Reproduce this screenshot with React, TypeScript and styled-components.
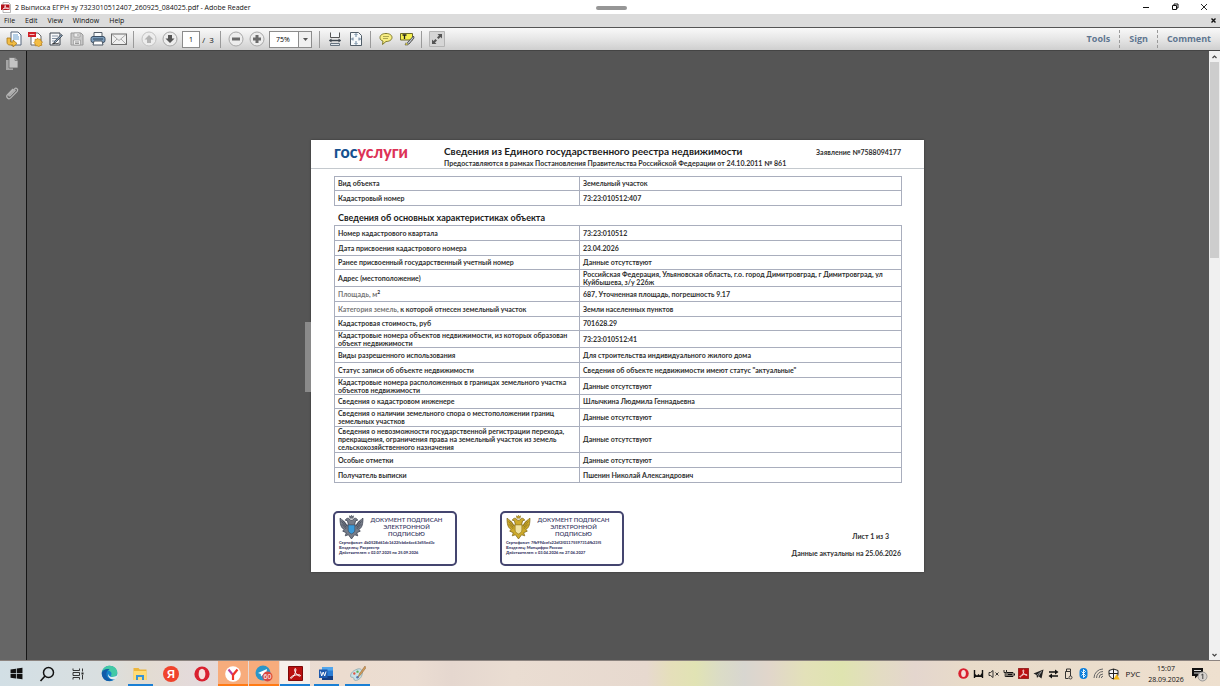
import React from 'react';
import styled, { createGlobalStyle } from 'styled-components';

const GlobalStyle = createGlobalStyle`
  * { box-sizing: border-box; }
  body { margin: 0; background: #555; }
  button { border: 0; padding: 0; margin: 0; background: none; font: inherit; color: inherit; }
`;

const uiFont = '"Open Sans", "Noto Sans", sans-serif';
const docFont = 'Lato, "Noto Sans", sans-serif';

const Window = styled.div`
  display: flex;
  flex-direction: column;
  height: 100vh;
  overflow: hidden;
  font-family: ${uiFont};
  font-size: 7px;
  color: #111;
`;

const TitleBar = styled.header`
  display: flex;
  align-items: center;
  justify-content: space-between;
  height: 14px;
  flex: none;
  background: #fff;
  padding-right: 6px;
  position: relative;
`;

const TitleText = styled.h1`
  display: flex;
  align-items: center;
  gap: 4px;
  margin: 0;
  padding-left: 1px;
  font-size: 7px;
  font-weight: 400;
  white-space: nowrap;
`;

const GrabHandle = styled.div`
  position: absolute;
  left: 50%;
  top: 6px;
  width: 31px;
  height: 4px;
  margin-left: -14px;
  border-radius: 2px;
  background: #969696;
`;

const WindowButtons = styled.div`
  display: flex;
  gap: 9px;
`;

const WindowButton = styled.button`
  display: flex;
  align-items: center;
  justify-content: center;
  width: 20px;
  height: 14px;
`;

const MenuBar = styled.nav`
  display: flex;
  align-items: center;
  gap: 10px;
  height: 13px;
  flex: none;
  padding: 0 4px;
  background: #dcdcdc;
`;

const MenuButton = styled.button`
  font-size: 7px;
  line-height: 12px;
`;

const CloseDocument = styled(MenuButton)`
  display: flex;
  margin-left: auto;
`;

const Toolbar = styled.div`
  display: flex;
  align-items: center;
  height: 24px;
  flex: none;
  padding: 0 9px 0 3px;
  border-top: 1px solid #555;
  border-bottom: 1px solid #444;
  background: linear-gradient(#f9f9f9, #e6e6e6 50%, #cfcfcf);
`;

const ToolButton = styled.button`
  display: flex;
  align-items: center;
  justify-content: center;
  width: 21px;
  height: 20px;
  flex: none;
`;

const Separator = styled.span`
  width: 1px;
  height: 17px;
  margin: 0 4px;
  flex: none;
  background: #9a9a9a;
`;

const PageInput = styled.input`
  width: 18px;
  height: 17px;
  margin-left: 2px;
  padding: 0;
  border: 1px solid #8c8c8c;
  background: #fff;
  font: 7px ${uiFont};
  text-align: center;
`;

const PageTotal = styled.span`
  width: 16px;
  text-align: center;
  font-size: 8px;
  white-space: pre;
`;

const ZoomBox = styled.label`
  display: flex;
  width: 43px;
  height: 17px;
  margin: 0 3px 0 2px;
  border: 1px solid #8c8c8c;
  background: #fff;
`;

const ZoomSelect = styled.select`
  appearance: none;
  width: 28px;
  border: 0;
  padding: 0 0 0 6px;
  background: #fff;
  font: 7px ${uiFont};
`;

const ZoomArrow = styled.span`
  display: flex;
  flex: 1;
  align-items: center;
  justify-content: center;
  border-left: 1px solid #8c8c8c;
  background: #f0f0f0;
`;

const PanelLinks = styled.div`
  display: flex;
  align-items: center;
  margin-left: auto;
`;

const PanelButton = styled.button`
  padding: 0 9px;
  font-size: 9px;
  font-weight: 700;
  line-height: 18px;
  color: #5f7690;
  & + & { border-left: 1px dashed #999; }
  &:last-child { padding-right: 0; }
`;

const Workspace = styled.div`
  display: flex;
  flex: 1;
  min-height: 0;
  background: #555;
`;

const SidePanel = styled.aside`
  display: flex;
  flex-direction: column;
  align-items: center;
  gap: 11px;
  width: 27px;
  flex: none;
  padding: 5px 3px 0 0;
  border-right: 1px solid #161616;
  background: #666;
`;

const Viewport = styled.main`
  display: flex;
  flex: 1;
  align-items: center;
  justify-content: center;
  min-width: 0;
  padding-right: 1px;
`;

const PageFrame = styled.div`
  position: relative;
`;

const PanelHandle = styled.div`
  position: absolute;
  right: 100%;
  top: 182px;
  width: 6px;
  height: 70px;
  background: #8a8a8a;
`;

const ScrollTrack = styled.div`
  display: flex;
  flex-direction: column;
  align-items: center;
  justify-content: space-between;
  width: 11px;
  flex: none;
  background: #f0f0f0;
`;

const ScrollTop = styled.div`
  display: flex;
  flex-direction: column;
  align-items: center;
  width: 100%;
  height: 34%;
`;

const ScrollButton = styled.button`
  display: flex;
  align-items: center;
  justify-content: center;
  width: 11px;
  height: 11px;
  flex: none;
`;

const ScrollThumb = styled.div`
  width: 9px;
  flex: 1;
  background: #cdcdcd;
`;

const Sheet = styled.article`
  display: flex;
  flex-direction: column;
  width: 613px;
  min-height: 432px;
  background: #fff;
  box-shadow: 0 0 2px #333;
  font-family: ${docFont};
  font-size: 7px;
  font-weight: 700;
  line-height: 8px;
  color: #303030;
`;

const SheetHeader = styled.header`
  display: grid;
  grid-template-columns: 110px 1fr auto;
  height: 29px;
  padding: 5px 23px 0;
  border-bottom: 1px solid #c4c9ce;
`;

const Logo = styled.div`
  font-size: 16px;
  font-weight: 900;
  line-height: 13px;
  color: #16518f;
`;

const LogoAccent = styled.span`
  color: #dd3257;
`;

const SheetTitle = styled.h2`
  margin: 0;
  font-size: 10px;
  font-weight: 700;
  line-height: 12px;
  color: #1b1b1b;
  white-space: nowrap;
`;

const SheetSubtitle = styled.p`
  margin: 1px 0 0;
  line-height: 10px;
  white-space: nowrap;
`;

const RequestNumber = styled.p`
  margin: 2px 0 0;
  line-height: 10px;
`;

const SheetBody = styled.div`
  padding: 7px 22px 0 23px;
`;

const DataTable = styled.table`
  width: 100%;
  table-layout: fixed;
  border-collapse: collapse;
`;

const Cell = styled.td<{ $h: number }>`
  height: ${p => p.$h}px;
  padding: 0 3px;
  border: 1px solid #a9aebd;
  line-height: 8px;
  vertical-align: middle;
  &:first-child { width: 245px; }
`;

const Faded = styled.span`
  color: #777;
`;

const Squared = styled.sup`
  font-size: 5px;
  line-height: 0;
`;

const SectionTitle = styled.h3`
  margin: 6px 4px 2px;
  font-size: 9px;
  font-weight: 700;
  line-height: 11px;
  color: #1b1b1b;
`;

const SheetFooter = styled.footer`
  display: flex;
  gap: 43px;
  margin-top: auto;
  padding: 0 23px 6px 22px;
`;

const Stamp = styled.section`
  display: grid;
  grid-template-columns: 27px 1fr;
  align-content: start;
  column-gap: 2px;
  width: 124px;
  height: 55px;
  padding: 2px 4px;
  border: 2px solid #44456f;
  border-radius: 5px;
  color: #3b3b66;
`;

const StampTitle = styled.h4`
  display: flex;
  flex-direction: column;
  align-items: center;
  margin: 0;
  padding: 1px 6px 0 0;
  font-size: 6px;
  font-weight: 600;
  line-height: 7px;
  white-space: nowrap;
`;

const StampDetails = styled.p`
  grid-column: 1 / -1;
  margin: 0;
  font-size: 4px;
  font-weight: 900;
  line-height: 5px;
  white-space: nowrap;
`;

const SheetNotes = styled.div`
  display: flex;
  flex-direction: column;
  gap: 7px;
  margin-left: auto;
  padding-top: 20px;
  text-align: right;
  line-height: 10px;
  white-space: nowrap;
`;

const PageNumber = styled.p`
  margin: 0 12px 0 0;
`;

const Validity = styled.p`
  margin: 0;
`;

const Taskbar = styled.footer`
  display: flex;
  align-items: stretch;
  height: 26px;
  flex: none;
  padding: 0 9px 0 1px;
  border-top: 1px solid #8c8480;
  background: linear-gradient(90deg, #d2dfe5 0, #d9dfe0 8%, #e3dcd2 12%, #e4dadb 16%, #ecdccf 28%, #ebddd2 34%, #e5d7cf 37%, #eaddd2 42%, #e7d9cf 53%, #e5dfba 55%, #e1e3b4 57%, #dbdcc6 59%, #d8d6d0 61%, #e1d6cb 63%, #e3e1b9 66%, #dfe4b0 69%, #e3dcc2 72%, #e4d6ce 75%, #e8dbc9 79%, #eee0cf 100%);
`;

const AppButtons = styled.div`
  display: flex;
  gap: 1px;
`;

const AppButton = styled.button<{ $bg?: string; $line?: string; $wide?: boolean }>`
  display: flex;
  align-items: center;
  justify-content: center;
  width: 30px;
  background: ${p => p.$bg ?? 'transparent'};
  position: relative;
  &::after {
    content: '';
    position: absolute;
    bottom: 0;
    left: ${p => (p.$wide ? 0 : 3)}px;
    right: ${p => (p.$wide ? 0 : 2)}px;
    height: 2px;
    background: ${p => p.$line ?? 'transparent'};
  }
`;

const Tray = styled.div`
  display: flex;
  align-items: center;
  margin-left: auto;
`;

const TrayButton = styled.button`
  display: flex;
  align-items: center;
  justify-content: center;
  width: 15px;
  height: 24px;
`;

const Language = styled.button`
  width: 24px;
  font-size: 8px;
`;

const Clock = styled.time`
  width: 42px;
  font-size: 7px;
  line-height: 11px;
  text-align: center;
`;

const NotifyButton = styled(TrayButton)`
  width: 24px;
`;

const S: React.FC<{ w?: number; h?: number; box?: string; children: React.ReactNode }> = ({ w = 16, h = 16, box, children }) => (
  <svg width={w} height={h} viewBox={box ?? `0 0 ${w} ${h}`} fill="none" aria-hidden="true">
    {children}
  </svg>
);

const PdfBadge = () => (
  <S w={10} h={11}>
    <path d="M2 .5h5.500l2 2v8H2z" fill="#fff" stroke="#999" strokeWidth=".7" />
    <path d="M0 2.500h8.500v5.500H0z" fill="#b5121b" />
    <path d="M1.500 7.500c2-1 3-3 2.700-4.500M4 4c.5 2 2 3 4 2.700M2.500 6.500l5-.6" stroke="#fff" strokeWidth=".8" />
  </S>
);

const OpenIcon = () => (
  <S>
    <path d="M5 1h7l3 3v10H5z" fill="#fafcff" stroke="#56677c" />
    <path d="M7 4h5M7 6h6M7 8h6" stroke="#6ea0cc" />
    <path d="M1 7v4c0 2 1 3 3 3h3v2l4-3.500L7 9v2H4.500V7z" fill="#f2bd45" stroke="#a87718" strokeWidth=".8" />
  </S>
);

const CreateIcon = () => (
  <S>
    <path d="M4 2h7l3 3v9H4z" fill="#fff" stroke="#666" />
    <path d="M1 1h8v5H1z" fill="#cf2027" />
    <path d="M2.500 3.500h5" stroke="#f7c3c3" />
    <path d="m10.500 7 1.200 1.400 1.900-.4.2 1.900 1.700 1-1.100 1.500.5 1.900-1.900.3-1.300 1.300-1.500-1.200-1.900.1-.1-1.900-1.300-1.300 1.200-1.400L8 8.300l1.800.2z" fill="#f4bd42" stroke="#b57c1a" strokeWidth=".7" />
  </S>
);

const EditIcon = () => (
  <S>
    <path d="M2 2h10v12H2z" fill="#f7f8fa" stroke="#3e4650" />
    <path d="M4 5h6M4 7.500h5M4 10h3" stroke="#8694a5" />
    <path d="m14.500 4.500-7 7-2 1.500 1-2.500 6.500-7z" fill="#8ea5bd" stroke="#333d48" strokeWidth=".8" />
    <path d="M4 13c3-2 4 1 7-1" stroke="#222" strokeWidth=".8" />
  </S>
);

const SaveIcon = () => (
  <S>
    <path d="M2 2h10l2 2v10H2z" fill="#c9c9c9" stroke="#999" />
    <path d="M5 2h6v4H5zM4.500 9h7v5h-7z" fill="#ededed" stroke="#a0a0a0" strokeWidth=".8" />
    <path d="M9 3v2M6 11h4M6 12.500h4" stroke="#999" />
  </S>
);

const PrintIcon = () => (
  <S>
    <path d="M4 1.500h8v5H4z" fill="#f9fbfc" stroke="#555e69" />
    <rect x="1" y="5.500" width="14" height="6" rx="2" fill="#7f9fbe" stroke="#3d5166" />
    <path d="M3 8h10" stroke="#2c4258" />
    <path d="M4 10h8l1 4H3z" fill="#fff" stroke="#4d5966" />
  </S>
);

const MailIcon = () => (
  <S>
    <rect x=".5" y="3" width="15" height="10.500" fill="#efefef" stroke="#6d6d6d" />
    <path d="m1 3.500 7 6 7-6M1 13l5-5m9 5-5-5" stroke="#999" strokeWidth=".8" />
  </S>
);

const Circle: React.FC<{ children: React.ReactNode; dim?: boolean }> = ({ children, dim }) => (
  <S>
    <circle cx="8" cy="8" r="7" fill="#ededed" stroke={dim ? '#c4c4c4' : '#a8a8a8'} />
    {children}
  </S>
);

const arrowDown = 'M6 4h4v3.500h2.500L8 12 3.500 7.500H6z';
const arrowUp = 'M6 12h4V8.500h2.500L8 4 3.500 8.500H6z';

const FitWidthIcon = () => (
  <S>
    <path d="M3.500 1.500v5h9v-5" fill="#f4f6f8" stroke="#555" />
    <path d="M2.500 9.500h11" stroke="#3e4750" strokeWidth="1.400" />
    <path d="M4.500 7.500 2 9.500l2.500 2zM11.500 7.500l2.500 2-2.500 2z" fill="#3e4750" />
    <path d="M3.500 14.500v-2h9v2z" fill="#dfe6ec" stroke="#667380" />
  </S>
);

const FitPageIcon = () => (
  <S>
    <path d="M2.500 1.500h8l3 3v10h-11z" fill="#f6f9fb" stroke="#515d68" />
    <path d="M8 3v3M8 10v3M4 8h2M10 8h2M6.500 4 8 2.500 9.500 4M6.500 12 8 13.500 9.500 12M5 6.500 3.500 8 5 9.500M11 6.500 12.500 8 11 9.500" stroke="#6d879f" />
  </S>
);

const NoteIcon = () => (
  <S>
    <path d="M8 2.500c3.800 0 6 1.700 6 4s-2.500 4-6 4l-3.500 3 .5-3.400C3 9.500 2 8.300 2 6.500c0-2.300 2.200-4 6-4z" fill="#f8ee83" stroke="#7e792c" />
    <path d="M5 5.500h6M5 7.500h5" stroke="#9b9542" strokeWidth=".8" />
  </S>
);

const HighlightIcon = () => (
  <S>
    <path d="M1.500 2.500h12v6.500h-12z" fill="#f6f04e" stroke="#6b692d" />
    <path d="M3.500 4h4M5.500 4v4" stroke="#222" strokeWidth="1.300" />
    <path d="m14.500 5-6 6.500-1.500 2 3-.5 5-6z" fill="#bcc3ca" stroke="#444" strokeWidth=".9" />
    <path d="m7 11.500-1 2.500h3" fill="#eee03c" stroke="#555" strokeWidth=".6" />
  </S>
);

const FullIcon = () => (
  <S>
    <path d="M.5.500h15v15H.5z" fill="#d6d6d6" stroke="#b4b4b4" />
    <path d="M8.500 3H13v4.500L11.500 6 9.500 8 8 6.500l2-2zM7.500 13H3V8.500L4.500 10l2-2L8 9.500l-2 2z" fill="#555" />
  </S>
);

const PagesIcon = () => (
  <S>
    <path d="M2 4h7v10H2z" fill="#a5a5a5" />
    <path d="M5 1.500h6l3 3V12H5z" fill="#c4c4c4" stroke="#6b6b6b" strokeWidth=".8" />
    <path d="M11 1.500v3h3" stroke="#777" strokeWidth=".8" />
  </S>
);

const ClipIcon = () => (
  <S>
    <path d="m11.500 5-5.300 5.500c-.8.9-2 0-1.200-1L10.500 4c1.700-1.800 4.300.3 2.700 2.300l-6.400 6.600c-2.200 2.200-5.500-.8-3.300-3.200L9 4" stroke="#b5b5b5" strokeWidth="1.200" />
  </S>
);

const Eagle: React.FC<{ body: string; edge: string; shield: string }> = ({ body, edge, shield }) => (
  <S w={25} h={25} box="0 0 24 24">
    <path d="M11 5C9 2 7 3 6 5l2 .5L9 9 7.500 10C6 6 3 5 1 3c0 5 .5 9 4 11L3.500 15.500 7 17l-1 3 3-1 3 4 3-4 3 1-1-3 3.500-1.500L19 14c3.500-2 4-6 4-11-2 2-5 3-6.500 7L15 9l1-3.500 2-.5c-1-2-3-3-5 0z" fill={body} stroke={edge} strokeWidth=".7" />
    <path d="M2.500 6 7 12M4 5.500 7.800 11M3 9l4 4.500M21.500 6 17 12M20 5.500 16.200 11M21 9l-4 4.500" stroke={edge} strokeWidth=".6" />
    <path d="M10.500 3 10 .8l1.200.7.8-1.300.8 1.300 1.200-.7-.5 2.200z" fill={body} stroke={edge} strokeWidth=".5" />
    <path d="M8.800 9.500h6.400v5c0 2-1.700 3-3.200 3.700-1.500-.7-3.200-1.700-3.200-3.700z" fill={shield} stroke={edge} strokeWidth=".5" />
  </S>
);

const SearchIcon = () => (
  <S>
    <circle cx="9.500" cy="6.500" r="5" stroke="#111" strokeWidth="1.500" />
    <path d="m6 10-4.500 5" stroke="#111" strokeWidth="1.600" />
  </S>
);

const WindowsIcon = () => (
  <S w={13} h={13} box="0 0 12 12">
    <path d="M.5 2.200 5.500 1.500v4.200h-5zM6.200 1.400 11.500.700v5H6.200zM.5 6.400h5v4.200l-5-.7zM6.200 6.400h5.300v5l-5.300-.7z" fill="#111" />
  </S>
);

const TaskViewIcon = () => (
  <S w={12} h={12}>
    <path d="M1 .500v2h6.500v-2M1 11.500v-2h6.500v2M1 4.500h6.500v3H1zM10.500.5v3M10.500 7v4.500" stroke="#222" strokeWidth=".9" />
    <path d="M9.500 4.500h2v2h-2z" fill="#222" />
  </S>
);

const EdgeIcon = () => (
  <S w={17} h={17} box="0 0 16 16">
    <circle cx="8" cy="8" r="7.300" fill="#1683ca" />
    <path d="M.8 7C1.500 3 4.500.7 8.200.7c4.300 0 7.200 3 7.100 6.500 0 2.500-1.900 4-4 4-1.800 0-2.300-.8-1.700-1.700C10.500 8 9.500 5.500 6.500 5.200 4 5 1.800 5.700.8 7z" fill="#43c9a5" />
    <path d="M.8 7c1-2.500 4.500-4 7.300-2.700C5.500 5 4.500 7.500 5.300 10c.8 2.600 3.300 4 6.800 3-2.500 2.500-6 2.800-8.600.8C1.500 12.300.5 9.500.8 7z" fill="#115ca9" />
    <path d="M7 8.500c0 2.200 2.500 3.500 6.500 2.200 1 -.3 2-1 2.200-2 .2 1.500-.5 3-2 4.500-2.500 1-5.800-.2-6.900-2.700-.3-.8-.2-1.500.2-2z" fill="#e5edf0" />
  </S>
);

const FolderIcon = () => (
  <S>
    <path d="M1.500 2h5l1.300 1.500h6.700V14h-13z" fill="#edb63b" />
    <path d="M1.500 5h13v9h-13z" fill="#ffdc76" />
    <path d="M4 14V9h8v5h-2v-3H6v3z" fill="#3994d7" />
  </S>
);

const RoundLetter: React.FC<{ bg: string; fg: string; letter: string }> = ({ bg, fg, letter }) => (
  <S>
    <circle cx="8" cy="8" r="8" fill={bg} />
    <text x="8" y="12" textAnchor="middle" fontFamily="Liberation Sans, sans-serif" fontSize="11" fontWeight="700" fill={fg}>{letter}</text>
  </S>
);

const YandexBrowserIcon = () => (
  <S>
    <circle cx="8" cy="8" r="7.800" fill="#fff" />
    <path d="m3.500 3.500 4.500 5.500" stroke="#b33ea0" strokeWidth="2" />
    <path d="M12.500 3.500 8 9v5" stroke="#f0362b" strokeWidth="2.200" />
  </S>
);

const OperaIcon: React.FC<{ size?: number }> = ({ size = 16 }) => (
  <S w={size} h={size} box="0 0 16 16">
    <circle cx="8" cy="8" r="7.600" fill="#d9202f" />
    <ellipse cx="8" cy="8" rx="3.400" ry="5.200" fill="#f5dfdc" />
  </S>
);

const TelegramIcon = () => (
  <S w={18} h={17}>
    <circle cx="8" cy="8" r="7.500" fill="#2b96c8" />
    <path d="m3 8 9-4-1.500 8-3-2-1.500 1.500-.3-2.500z" fill="#fff" />
    <circle cx="12.500" cy="11.500" r="5" fill="#d9483f" />
    <text x="12.500" y="14" textAnchor="middle" fontFamily="Liberation Sans, sans-serif" fontSize="7" fill="#fff">60</text>
  </S>
);

const AcrobatIcon: React.FC<{ size?: number }> = ({ size = 15 }) => (
  <S w={size} h={size} box="0 0 15 15">
    <path d="M.5.500h14v14H.5z" fill="#b90f0f" stroke="#7c0909" />
    <path d="M7 2.500c1.300 0 1 2 .3 4C6.500 9 4.500 12 3 12.300c-1.500 0 .5-2.500 4-3.200 3-.7 5.500-.4 5.500.5 0 1.200-2.500.2-4-1.500C7.200 6.500 6 3.500 7 2.500z" stroke="#fff" strokeWidth="1" />
  </S>
);

const WordIcon = () => (
  <S w={16} h={15}>
    <path d="M4 1h11v13H4z" fill="#2b7cd3" />
    <path d="M4 1h11v3.500H4z" fill="#52a6ec" />
    <path d="M4 10h11v4H4z" fill="#153e82" />
    <path d="M1 3.500h8.500V12H1z" fill="#1d59ad" />
    <path d="m2.500 5.500 1.200 4.500 1.500-4 1.500 4L8 5.500" stroke="#fff" />
  </S>
);

const PaintIcon = () => (
  <S w={17} h={17} box="0 0 16 16">
    <path d="M7.500 4C11 2.500 13 5 12.500 8c-.6 4-3.500 6.500-6.500 6.500-1.700 0-1-2-2-2.700-1-.6-2.500.3-2.500-1.500C1.500 7.500 4 5.300 7.500 4z" fill="#c9e1e6" stroke="#7fa0a8" strokeWidth=".7" />
    <circle cx="5" cy="8" r="1.100" fill="#e15442" /><circle cx="8" cy="6.300" r="1.100" fill="#57ad55" /><circle cx="10.500" cy="8" r="1" fill="#e7b63c" /><circle cx="8" cy="11.500" r="1.200" fill="#4579c9" />
    <path d="m15 1-5 7-2 4 3.200-3L16 2.500z" fill="#d59b55" stroke="#8a6a47" strokeWidth=".5" />
  </S>
);

type Row = { label: React.ReactNode; value: string; h: number };

const objectRows: Row[] = [
  { label: 'Вид объекта', value: 'Земельный участок', h: 14 },
  { label: 'Кадастровый номер', value: '73:23:010512:407', h: 15 },
];

const detailRows: Row[] = [
  { label: 'Номер кадастрового квартала', value: '73:23:010512', h: 15 },
  { label: 'Дата присвоения кадастрового номера', value: '23.04.2026', h: 15 },
  { label: 'Ранее присвоенный государственный учетный номер', value: 'Данные отсутствуют', h: 14 },
  { label: 'Адрес (местоположение)', value: 'Российская Федерация, Ульяновская область, г.о. город Димитровград, г Димитровград, ул Куйбышева, з/у 226ж', h: 17 },
  { label: <><Faded>Площадь, м</Faded><Squared>2</Squared></>, value: '687, Уточненная площадь, погрешность 9.17', h: 15 },
  { label: <><Faded>Категория земель,</Faded> к которой отнесен земельный участок</>, value: 'Земли населенных пунктов', h: 15 },
  { label: 'Кадастровая стоимость, руб', value: '701628.29', h: 14 },
  { label: 'Кадастровые номера объектов недвижимости, из которых образован объект недвижимости', value: '73:23:010512:41', h: 17 },
  { label: 'Виды разрешенного использования', value: 'Для строительства индивидуального жилого дома', h: 15 },
  { label: 'Статус записи об объекте недвижимости', value: 'Сведения об объекте недвижимости имеют статус "актуальные"', h: 15 },
  { label: 'Кадастровые номера расположенных в границах земельного участка объектов недвижимости', value: 'Данные отсутствуют', h: 17 },
  { label: 'Сведения о кадастровом инженере', value: 'Шлычкина Людмила Геннадьевна', h: 14 },
  { label: 'Сведения о наличии земельного спора о местоположении границ земельных участков', value: 'Данные отсутствуют', h: 18 },
  { label: 'Сведения о невозможности государственной регистрации перехода, прекращения, ограничения права на земельный участок из земель сельскохозяйственного назначения', value: 'Данные отсутствуют', h: 26 },
  { label: 'Особые отметки', value: 'Данные отсутствуют', h: 15 },
  { label: 'Получатель выписки', value: 'Пшенин Николай Александрович', h: 15 },
];

const Rows: React.FC<{ rows: Row[] }> = ({ rows }) => (
  <DataTable>
    <tbody>
      {rows.map((r, i) => (
        <tr key={i}>
          <Cell $h={r.h}>{r.label}</Cell>
          <Cell $h={r.h}>{r.value}</Cell>
        </tr>
      ))}
    </tbody>
  </DataTable>
);

const SignatureStamp: React.FC<{ emblem: React.ReactNode; lines: string[] }> = ({ emblem, lines }) => (
  <Stamp>
    {emblem}
    <StampTitle>
      <span>ДОКУМЕНТ ПОДПИСАН</span>
      <span>ЭЛЕКТРОННОЙ</span>
      <span>ПОДПИСЬЮ</span>
    </StampTitle>
    <StampDetails>{lines.map(l => <React.Fragment key={l}>{l}<br /></React.Fragment>)}</StampDetails>
  </Stamp>
);

export default function App() {
  return (
    <Window>
      <GlobalStyle />
      <TitleBar>
        <TitleText><PdfBadge />2 Выписка ЕГРН зу 7323010512407_260925_084025.pdf - Adobe Reader</TitleText>
        <GrabHandle />
        <WindowButtons>
          <WindowButton aria-label="Minimize"><S w={8} h={8}><path d="M1 4.500h6" stroke="#111" /></S></WindowButton>
          <WindowButton aria-label="Restore"><S w={8} h={8}><path d="M1.500 2.500h4v4h-4zM3 2V1h4v4H6" stroke="#111" /></S></WindowButton>
          <WindowButton aria-label="Close"><S w={8} h={8}><path d="m1 1 6 6M7 1 1 7" stroke="#111" strokeWidth=".9" /></S></WindowButton>
        </WindowButtons>
      </TitleBar>
      <MenuBar>
        {['File', 'Edit', 'View', 'Window', 'Help'].map(m => <MenuButton key={m}>{m}</MenuButton>)}
        <CloseDocument aria-label="Close document"><S w={5} h={5}><path d="m.5.500 4 4m0-4-4 4" stroke="#111" strokeWidth="1.400" /></S></CloseDocument>
      </MenuBar>
      <Toolbar>
        <ToolButton aria-label="Open"><OpenIcon /></ToolButton>
        <ToolButton aria-label="Create PDF"><CreateIcon /></ToolButton>
        <ToolButton aria-label="Edit"><EditIcon /></ToolButton>
        <ToolButton aria-label="Save"><SaveIcon /></ToolButton>
        <ToolButton aria-label="Print"><PrintIcon /></ToolButton>
        <ToolButton aria-label="Mail"><MailIcon /></ToolButton>
        <Separator />
        <ToolButton aria-label="Previous page"><Circle dim><path d={arrowUp} fill="#b3b3b3" /></Circle></ToolButton>
        <ToolButton aria-label="Next page"><Circle><path d={arrowDown} fill="#555" /></Circle></ToolButton>
        <PageInput aria-label="Page" defaultValue="1" />
        <PageTotal>/  3</PageTotal>
        <Separator />
        <ToolButton aria-label="Zoom out"><Circle><path d="M4 6.500h8v3H4z" fill="#6b6b6b" /></Circle></ToolButton>
        <ToolButton aria-label="Zoom in"><Circle><path d="M6.500 4h3v2.500H12v3H9.500V12h-3V9.500H4v-3h2.500z" fill="#6b6b6b" /></Circle></ToolButton>
        <ZoomBox>
          <ZoomSelect aria-label="Zoom" defaultValue="75%"><option>75%</option><option>100%</option></ZoomSelect>
          <ZoomArrow><S w={5} h={3}><path d="M0 0h5L2.500 3z" fill="#555" /></S></ZoomArrow>
        </ZoomBox>
        <Separator />
        <ToolButton aria-label="Fit width"><FitWidthIcon /></ToolButton>
        <ToolButton aria-label="Fit page"><FitPageIcon /></ToolButton>
        <Separator />
        <ToolButton aria-label="Add note"><NoteIcon /></ToolButton>
        <ToolButton aria-label="Highlight text"><HighlightIcon /></ToolButton>
        <Separator />
        <ToolButton aria-label="Full screen"><FullIcon /></ToolButton>
        <PanelLinks>
          <PanelButton>Tools</PanelButton>
          <PanelButton>Sign</PanelButton>
          <PanelButton>Comment</PanelButton>
        </PanelLinks>
      </Toolbar>
      <Workspace>
        <SidePanel>
          <button aria-label="Page thumbnails"><PagesIcon /></button>
          <button aria-label="Attachments"><ClipIcon /></button>
        </SidePanel>
        <Viewport>
          <PageFrame>
            <PanelHandle />
            <Sheet>
              <SheetHeader>
                <Logo>гос<LogoAccent>услуги</LogoAccent></Logo>
                <div>
                  <SheetTitle>Сведения из Единого государственного реестра недвижимости</SheetTitle>
                  <SheetSubtitle>Предоставляются в рамках Постановления Правительства Российской Федерации от 24.10.2011 № 861</SheetSubtitle>
                </div>
                <RequestNumber>Заявление №7588094177</RequestNumber>
              </SheetHeader>
              <SheetBody>
                <Rows rows={objectRows} />
                <SectionTitle>Сведения об основных характеристиках объекта</SectionTitle>
                <Rows rows={detailRows} />
              </SheetBody>
              <SheetFooter>
                <SignatureStamp
                  emblem={<Eagle body="#777d89" edge="#353b4c" shield="#3b9ad9" />}
                  lines={['Сертификат: 4b0528d61dc1622fcb6e6cc63d55ed3c', 'Владелец: Росреестр', 'Действителен: с 02.07.2025 по 25.09.2026']}
                />
                <SignatureStamp
                  emblem={<Eagle body="#cdaa2b" edge="#7d6516" shield="#f0e2a0" />}
                  lines={['Сертификат: 7fb994cefa22df2f01175597314fb23f5', 'Владелец: Минцифры России', 'Действителен: с 03.04.2026 по 27.06.2027']}
                />
                <SheetNotes>
                  <PageNumber>Лист 1 из 3</PageNumber>
                  <Validity>Данные актуальны на 25.06.2026</Validity>
                </SheetNotes>
              </SheetFooter>
            </Sheet>
          </PageFrame>
        </Viewport>
        <ScrollTrack>
          <ScrollTop>
            <ScrollButton aria-label="Scroll up"><S w={5} h={4}><path d="M.5 3 2.500 1l2 2" stroke="#444" strokeWidth="1.200" /></S></ScrollButton>
            <ScrollThumb />
          </ScrollTop>
          <ScrollButton aria-label="Scroll down"><S w={5} h={4}><path d="m.5 1 2 2 2-2" stroke="#444" strokeWidth="1.200" /></S></ScrollButton>
        </ScrollTrack>
      </Workspace>
      <Taskbar>
        <AppButtons>
          <AppButton aria-label="Start"><WindowsIcon /></AppButton>
          <AppButton aria-label="Search"><SearchIcon /></AppButton>
          <AppButton aria-label="Task view"><TaskViewIcon /></AppButton>
          <AppButton aria-label="Edge"><EdgeIcon /></AppButton>
          <AppButton aria-label="Explorer" $line="#1a7fd4"><FolderIcon /></AppButton>
          <AppButton aria-label="Yandex"><RoundLetter bg="#f0432c" fg="#fff" letter="Я" /></AppButton>
          <AppButton aria-label="Opera"><OperaIcon /></AppButton>
          <AppButton aria-label="Yandex Browser" $bg="#f7ac7c" $line="#ff7a14" $wide><YandexBrowserIcon /></AppButton>
          <AppButton aria-label="Telegram" $bg="#f7ac7c" $line="#ff7a14" $wide><TelegramIcon /></AppButton>
          <AppButton aria-label="Adobe Reader" $bg="#f7f0eb" $line="#1a7fd4" $wide><AcrobatIcon /></AppButton>
          <AppButton aria-label="Word" $line="#1a7fd4"><WordIcon /></AppButton>
          <AppButton aria-label="Paint" $line="#1a7fd4"><PaintIcon /></AppButton>
        </AppButtons>
        <Tray>
          <TrayButton aria-label="Opera"><OperaIcon size={11} /></TrayButton>
          <TrayButton aria-label="Monitor"><S w={11} h={10}><path d="M1.500 1v8M9.500 1v8" stroke="#111" strokeWidth="1.400" /><path d="M2 8V5l2 1.500L5.500 5 7 6.500 9 4v4z" fill="#111" /></S></TrayButton>
          <TrayButton aria-label="Sound muted"><S w={11} h={10}><path d="M1 3.500h1.500l2.500-2v7l-2.500-2H1zM7.500 3.500l3 3m0-3-3 3" stroke="#222" strokeWidth=".9" /></S></TrayButton>
          <TrayButton aria-label="Battery"><S w={12} h={10}><path d="M1 1v2.500h2.500V1M2.200 4v3.500H4" stroke="#111" strokeWidth=".9" /><path d="M4 3.500h6v4H4z" stroke="#111" /><path d="M5 4.500h4v2H5zM11 4.500h1v2h-1z" fill="#111" /></S></TrayButton>
          <TrayButton aria-label="Acrobat"><AcrobatIcon size={11} /></TrayButton>
          <TrayButton aria-label="Telegram"><S w={11} h={10}><path d="M.5 4.500 10.500.5 8.500 9.500 5.500 7.300 4 9 3.500 6z" fill="#222" /><path d="m4 6 4.500-3.500L5.500 7" stroke="#ccc" strokeWidth=".6" /></S></TrayButton>
          <TrayButton aria-label="Transfer"><S w={11} h={10}><path d="M1 3h8M2 7h8" stroke="#111" strokeWidth="1.400" /><path d="M7 .5 10.500 3 7 5.500zM4 4.500.5 7 4 9.500z" fill="#111" /></S></TrayButton>
          <TrayButton aria-label="USB"><S w={9} h={12}><path d="M2.500 3.500V1h4v2.500M1.500 3.500h5V8M1.500 3.500v7h3" stroke="#222" strokeWidth=".9" /><circle cx="6.500" cy="9.500" r="1.500" stroke="#222" strokeWidth=".8" /></S></TrayButton>
          <TrayButton aria-label="Bluetooth"><S w={9} h={11}><rect x=".5" width="8" height="11" rx="4" fill="#0b7edb" /><path d="m2.500 3.500 4 4-2 2v-8l2 2-4 4" stroke="#fff" strokeWidth=".9" /></S></TrayButton>
          <TrayButton aria-label="Network"><S w={11} h={11}><path d="M1 10A9 9 0 0 1 10 1M3.500 10A6.500 6.500 0 0 1 10 3.500M6 10a4 4 0 0 1 4-4M8.300 10a2 2 0 0 1 1.700-1.800" stroke="#666" strokeWidth="1" /></S></TrayButton>
          <TrayButton aria-label="Security"><S w={12} h={12}><path d="M5.500 1 10 2.500V6c0 2.500-2 4-4.500 5C3 10 1 8.500 1 6V2.500z" fill="#f5f5f5" stroke="#222" /><path d="M5.500 1v10M1 5.500h9" stroke="#222" /><path d="m8.500 6 3.300 5.500H5.500z" fill="#f4b818" /></S></TrayButton>
          <Language>РУС</Language>
          <Clock>15:07<br />28.09.2026</Clock>
          <NotifyButton aria-label="Notifications"><S w={17} h={16}><path d="M1 2h11v8H6.500L4 12.500V10H1z" fill="#111" /><path d="M3 4.500h7M3 7h7" stroke="#ddd" /><circle cx="11.500" cy="10.500" r="4.500" fill="#d7d2cd" stroke="#888" strokeWidth=".8" /><path d="m10.300 9 1.500-1v5" stroke="#333" strokeWidth=".9" /></S></NotifyButton>
        </Tray>
      </Taskbar>
    </Window>
  );
}
